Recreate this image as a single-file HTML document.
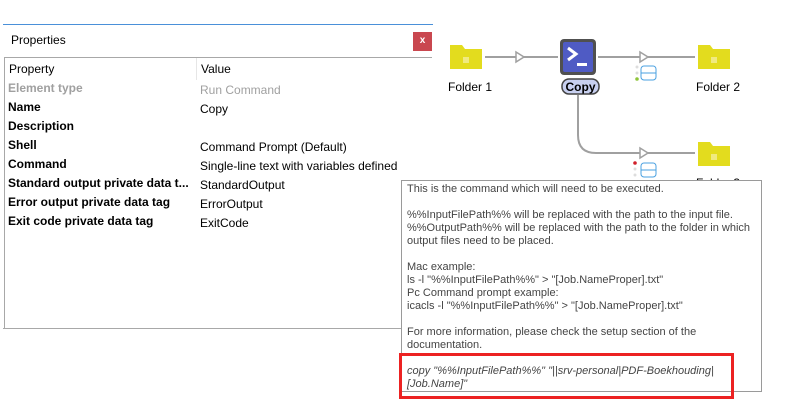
<!DOCTYPE html>
<html><head><meta charset="utf-8"><style>
*{margin:0;padding:0;box-sizing:border-box}
body{width:785px;height:408px;background:#fff;position:relative;overflow:hidden;font-family:"Liberation Sans",sans-serif;font-size:12px;color:#000}
.a{position:absolute;white-space:nowrap}
.b{font-weight:bold}
.g{color:#a0a0a0}
.tt{position:absolute;left:401px;top:180px;width:361px;height:212px;border:1px solid #9a9a9a;background:#fff;color:#444;font-size:11px;line-height:13px;padding:2px 5px;white-space:nowrap}
</style></head><body>
<div class="a" style="left:3px;top:24px;width:430px;height:1px;background:#4a90d9"></div>
<div class="a" style="left:11px;top:33px;font-size:12px">Properties</div>
<div class="a" style="left:413px;top:32px;width:19px;height:19px;background:#c9474f;color:#fff;font-size:10px;font-weight:bold;text-align:center;line-height:18px">x</div>
<div class="a" style="left:4px;top:57px;width:428px;height:272px;border:1px solid #a8a8a8;border-right:none"></div>
<div class="a" style="left:3px;top:328px;width:400px;height:1px;background:#a8a8a8"></div>
<div class="a" style="left:196px;top:58px;width:1px;height:22px;background:#e6e6e6"></div>
<div class="a" style="left:9px;top:62px">Property</div>
<div class="a" style="left:201px;top:62px">Value</div>
<div class="a b g" style="left:8px;top:81px">Element type</div>
<div class="a g" style="left:200px;top:83px">Run Command</div>
<div class="a b" style="left:8px;top:100px">Name</div>
<div class="a" style="left:200px;top:102px">Copy</div>
<div class="a b" style="left:8px;top:119px">Description</div>
<div class="a b" style="left:8px;top:138px">Shell</div>
<div class="a" style="left:200px;top:140px">Command Prompt (Default)</div>
<div class="a b" style="left:8px;top:157px">Command</div>
<div class="a" style="left:200px;top:159px">Single-line text with variables defined</div>
<div class="a b" style="left:8px;top:176px">Standard output private data t...</div>
<div class="a" style="left:200px;top:178px">StandardOutput</div>
<div class="a b" style="left:8px;top:195px">Error output private data tag</div>
<div class="a" style="left:200px;top:197px">ErrorOutput</div>
<div class="a b" style="left:8px;top:214px">Exit code private data tag</div>
<div class="a" style="left:200px;top:216px">ExitCode</div>

<svg class="a" style="left:440px;top:0" width="345" height="190">
<g fill="#e3dc1e"><path d="M10 45h12l3 4h17v20H10z"/><path d="M258 45h12l3 4h17v20h-32z"/><path d="M258 142h12l3 4h17v20h-32z"/></g>
<g fill="#f0ea80"><rect x="23" y="57" width="6" height="6"/><rect x="271" y="57" width="6" height="6"/><rect x="271" y="154" width="6" height="6"/></g>
<g stroke="#a0a0a0" stroke-width="2" fill="none"><path d="M45 57h73M158 57h97M138 95v40q0 18 18 18h99"/></g>
<g fill="#fff" stroke="#a0a0a0" stroke-width="1.5"><path d="M76 52l8 5-8 5z"/><path d="M200 52l8 5-8 5z"/><path d="M200 148l8 5-8 5z"/></g>
<rect x="120" y="39" width="36" height="36" rx="4" fill="#505050"/>
<rect x="123" y="42" width="30" height="30" rx="2" fill="#4f5bc4"/>
<path d="M128 48l8 6-8 6" stroke="#fff" stroke-width="3" fill="none"/><rect x="137" y="63" width="10" height="3" fill="#fff"/>
<rect x="122" y="79" width="37" height="15" rx="7" fill="#c8d0f0" stroke="#444" stroke-width="1.5"/>
<text x="140.5" y="91" text-anchor="middle" font-family="Liberation Sans,sans-serif" font-weight="bold" font-size="12">Copy</text>
<g fill="none" stroke="#4aa0e0"><rect x="201" y="66" width="15" height="14" rx="3"/><path d="M201 73h15"/><rect x="201" y="163" width="15" height="14" rx="3"/><path d="M201 170h15"/></g>
<g fill="#ddd"><circle cx="197" cy="67" r="1.5"/><circle cx="197" cy="73" r="1.5"/><circle cx="195" cy="169" r="1.5"/><circle cx="195" cy="175" r="1.5"/></g>
<circle cx="197" cy="79" r="1.8" fill="#8fc53a"/><circle cx="195" cy="163" r="1.8" fill="#d0202a"/>
<text x="8" y="91" font-family="Liberation Sans,sans-serif" font-size="12">Folder 1</text>
<text x="256" y="91" font-family="Liberation Sans,sans-serif" font-size="12">Folder 2</text>
<text x="256" y="187" font-family="Liberation Sans,sans-serif" font-size="12">Folder 3</text>
</svg>

<div class="tt">This is the command which will need to be executed.<br><br>%%InputFilePath%% will be replaced with the path to the input file.<br>%%OutputPath%% will be replaced with the path to the folder in which<br>output files need to be placed.<br><br>Mac example:<br>ls -l "%%InputFilePath%%" &gt; "[Job.NameProper].txt"<br>Pc Command prompt example:<br>icacls -l "%%InputFilePath%%" &gt; "[Job.NameProper].txt"<br><br>For more information, please check the setup section of the<br>documentation.<br><br><i>copy "%%InputFilePath%%" "||srv-personal|PDF-Boekhouding|<br>[Job.Name]"</i></div>
<div class="a" style="left:399px;top:353px;width:335px;height:46px;border:3px solid #ec2222"></div>
</body></html>
